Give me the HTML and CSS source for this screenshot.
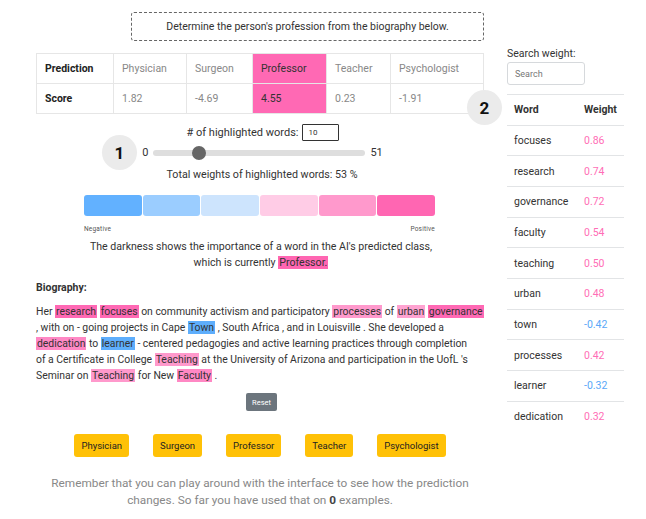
FILE: index.html
```html
<!DOCTYPE html>
<html lang="en">

<head>
    <meta charset="UTF-8">
    <meta name="viewport" content="width=device-width, initial-scale=1.0">
    <title>Profession prediction</title>
    <link rel="stylesheet" href="styles.css">
</head>

<body>
    <div class="page">
        <main class="main-col">
            <div class="task">Determine the person's profession from the biography below.</div>

            <table class="pred-table">
                <tr>
                    <th>Prediction</th>
                    <td>Physician</td>
                    <td>Surgeon</td>
                    <td class="top">Professor</td>
                    <td>Teacher</td>
                    <td>Psychologist</td>
                </tr>
                <tr>
                    <th>Score</th>
                    <td>1.82</td>
                    <td>-4.69</td>
                    <td class="top">4.55</td>
                    <td>0.23</td>
                    <td>-1.91</td>
                </tr>
            </table>

            <div class="controls">
                <span class="step step-1">1</span>
                <div class="count-row">
                    # of highlighted words:
                    <span class="count-box">10</span>
                </div>
                <div class="slider-row">
                    <span>0</span>
                    <div class="track"><span class="thumb"></span></div>
                    <span>51</span>
                </div>
                <div class="total">Total weights of highlighted words: 53 %</div>
            </div>

            <div class="legend">
                <div class="scale">
                    <span class="s1"></span>
                    <span class="s2"></span>
                    <span class="s3"></span>
                    <span class="s4"></span>
                    <span class="s5"></span>
                    <span class="s6"></span>
                </div>
                <div class="scale-labels">
                    <span>Negative</span>
                    <span>Positive</span>
                </div>
            </div>

            <p class="explain">The darkness shows the importance of a word in the AI's predicted class,<br>
                which is currently <mark class="hl-current">Professor.</mark></p>

            <h4 class="bio-title">Biography:</h4>
            <p class="bio">
                Her <mark class="p5">research</mark> <mark class="p5">focuses</mark> on community activism and participatory <mark class="p3">processes</mark> of <mark class="p2">urban</mark> <mark class="p5">governance</mark><br>
                , with on - going projects in Cape <mark class="n4">Town</mark> , South Africa , and in Louisville . She developed a<br>
                <mark class="p4">dedication</mark> to <mark class="n4">learner</mark> - centered pedagogies and active learning practices through completion<br>
                of a Certificate in College <mark class="p3">Teaching</mark> at the University of Arizona and participation in the UofL 's<br>
                Seminar on <mark class="p3">Teaching</mark> for New <mark class="p4">Faculty</mark> .
            </p>

            <div class="reset-row"><button class="reset">Reset</button></div>

            <div class="choices">
                <button>Physician</button>
                <button>Surgeon</button>
                <button>Professor</button>
                <button>Teacher</button>
                <button>Psychologist</button>
            </div>

            <p class="reminder">Remember that you can play around with the interface to see how the prediction<br>
                changes. So far you have used that on <b>0</b> examples.</p>
        </main>

        <aside class="side-col">
            <span class="step step-2">2</span>
            <label class="search-label">Search weight:</label>
            <input class="search" type="text" placeholder="Search">

            <table class="weights">
                <tr><th>Word</th><th>Weight</th></tr>
                <tr><td>focuses</td><td class="pos">0.86</td></tr>
                <tr><td>research</td><td class="pos">0.74</td></tr>
                <tr><td>governance</td><td class="pos">0.72</td></tr>
                <tr><td>faculty</td><td class="pos">0.54</td></tr>
                <tr><td>teaching</td><td class="pos">0.50</td></tr>
                <tr><td>urban</td><td class="pos">0.48</td></tr>
                <tr><td>town</td><td class="neg">-0.42</td></tr>
                <tr><td>processes</td><td class="pos">0.42</td></tr>
                <tr><td>learner</td><td class="neg">-0.32</td></tr>
                <tr><td>dedication</td><td class="pos">0.32</td></tr>
            </table>
        </aside>
    </div>
</body>

</html>
```

FILE: styles.css
```css
* {
    box-sizing: border-box;
    margin: 0;
    padding: 0;
    font-family: Roboto, "Liberation Sans", Arial, sans-serif;
}

body {
    background-color: white;
    color: #333;
}

.page {
    display: flex;
    gap: 23px;
    padding-left: 36px;
}

.main-col {
    width: 448px;
    display: flex;
    flex-direction: column;
}

.task {
    width: 353px;
    height: 29px;
    margin: 12px 0 0 auto;
    border: 1px dashed #666;
    border-radius: 3px;
    display: flex;
    align-items: center;
    justify-content: center;
    font-size: 10.5px;
    color: #333;
}

.pred-table {
    margin-top: 12px;
    width: 448px;
    border-collapse: collapse;
    font-size: 10.5px;
}

.pred-table th,
.pred-table td {
    height: 30px;
    padding: 0 8px;
    border: 1px solid #e6e6e6;
    text-align: left;
    color: #888;
    font-weight: normal;
}

.pred-table th {
    width: 77px;
    color: #222;
    font-weight: bold;
}

.pred-table td:nth-child(2) { width: 73px; }
.pred-table td:nth-child(3) { width: 66px; }
.pred-table td:nth-child(4) { width: 74px; }
.pred-table td:nth-child(5) { width: 64px; }

.pred-table .top {
    background-color: #ff69b4;
    color: #333;
}

.controls {
    position: relative;
    display: flex;
    flex-direction: column;
    align-items: center;
    font-size: 11px;
    color: #333;
}

.step {
    position: absolute;
    width: 35px;
    height: 35px;
    border-radius: 50%;
    background-color: #ebebeb;
    color: #111;
    font-size: 17px;
    font-weight: bold;
    display: flex;
    align-items: center;
    justify-content: center;
}

.step-1 {
    left: 66px;
    top: 21px;
}

.count-row {
    margin-top: 10px;
    display: flex;
    align-items: center;
    gap: 4px;
    margin-left: 6px;
}

.count-box {
    width: 37px;
    height: 17px;
    border: 1px solid #333;
    border-radius: 1px;
    font-size: 8px;
    padding-left: 5px;
    display: flex;
    align-items: center;
}

.slider-row {
    margin-top: 5px;
    display: flex;
    align-items: center;
    gap: 5px;
    margin-left: 5px;
}

.track {
    position: relative;
    width: 212px;
    height: 6px;
    border-radius: 3px;
    background-color: #dedede;
}

.thumb {
    position: absolute;
    left: 39px;
    top: -4px;
    width: 14px;
    height: 14px;
    border-radius: 50%;
    background-color: #666;
}

.total {
    margin-top: 9px;
    margin-left: 4px;
    font-size: 10.7px;
}

.legend {
    margin-top: 14px;
    width: 351px;
    margin-left: 48px;
}

.scale {
    display: flex;
    gap: 1px;
}

.scale span {
    flex: 1;
    height: 21px;
    border-radius: 3px;
}

.s1 { background-color: #62b1ff; }
.s2 { background-color: #9bcdff; }
.s3 { background-color: #cde4fd; }
.s4 { background-color: #ffcce6; }
.s5 { background-color: #ff99cc; }
.s6 { background-color: #ff66b2; }

.scale-labels {
    display: flex;
    justify-content: space-between;
    margin-top: 9px;
    font-size: 6.5px;
    color: #555;
    letter-spacing: .2px;
}

.explain {
    margin-top: 6px;
    text-align: center;
    font-size: 10.6px;
    line-height: 16px;
    color: #333;
    margin-left: 2px;
}

mark {
    color: #333;
    padding: 0 1px;
}

.hl-current {
    background-color: #ff66b2;
}

.bio-title {
    margin-top: 10px;
    font-size: 10.5px;
    font-weight: bold;
    color: #333;
}

.bio {
    margin-top: 10px;
    font-size: 10.4px;
    line-height: 16px;
    color: #333;
    white-space: nowrap;
}

.p2 { background-color: #ffa3d1; }
.p3 { background-color: #ff99cc; }
.p4 { background-color: #ff88c4; }
.p5 { background-color: #ff69b4; }
.n4 { background-color: #5eaefc; }

.reset-row {
    margin-top: 9px;
    display: flex;
    justify-content: center;
    margin-left: 3px;
}

button {
    border: none;
    cursor: pointer;
}

.reset {
    width: 31px;
    height: 18px;
    border-radius: 2px;
    background-color: #6c757d;
    color: white;
    font-size: 7.5px;
}

.choices {
    margin-top: 23px;
    display: flex;
    justify-content: center;
    gap: 24px;
}

.choices button {
    height: 23px;
    padding: 0 7px;
    border-radius: 3px;
    background-color: #ffc107;
    color: #222;
    font-size: 9.5px;
}

.reminder {
    margin-top: 18px;
    text-align: center;
    font-size: 11.8px;
    line-height: 17px;
    color: #888;
}

.reminder b {
    color: #444;
}

.side-col {
    position: relative;
    width: 117px;
    display: flex;
    flex-direction: column;
    font-size: 10.5px;
}

.search-label {
    margin-top: 47px;
    color: #333;
}

.search {
    margin-top: 2px;
    width: 78px;
    height: 23px;
    border: 1px solid #d6d9dc;
    border-radius: 3px;
    padding-left: 7px;
    font-size: 9px;
}

.search::placeholder {
    color: #777;
}

.step-2 {
    left: -40px;
    top: 90px;
}

.weights {
    margin-top: 9px;
    width: 117px;
    border-collapse: collapse;
}

.weights th,
.weights td {
    height: 30.67px;
    padding-left: 7px;
    border-top: 1px solid #e2e4e6;
    text-align: left;
    color: #333;
}

.weights th:last-child,
.weights td:last-child {
    width: 40px;
    padding-left: 0;
}

.weights .pos {
    color: #ff6eb6;
}

.weights .neg {
    color: #5aa8f8;
}
```
